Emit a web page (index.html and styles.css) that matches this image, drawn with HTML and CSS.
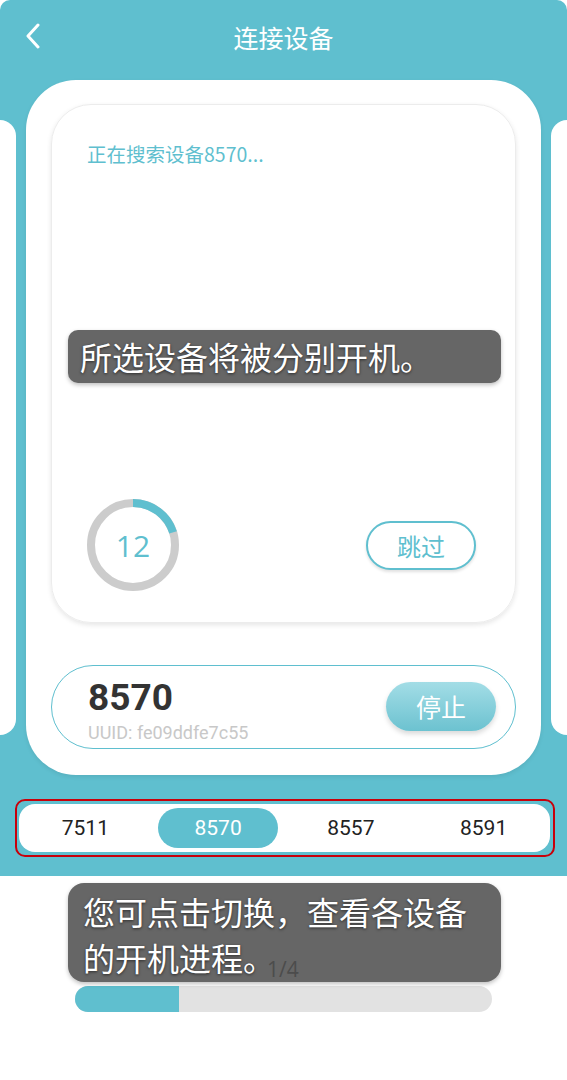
FILE: index.html
```html
<!DOCTYPE html>
<html lang="zh">
<head>
<meta charset="utf-8">
<title>连接设备</title>
<link rel="stylesheet" href="styles.css">
</head>
<body>
<div class="screen">
  <section class="top">
    <header class="header">
      <svg class="back" width="16" height="26" viewBox="0 0 16 26"><path d="M13 2 L3 13 L13 24" fill="none" stroke="#fff" stroke-width="3" stroke-linecap="round" stroke-linejoin="round"/></svg>
      <h1 class="title">连接设备</h1>
    </header>
    <div class="carousel">
      <div class="side side-left"></div>
      <div class="main-card">
        <div class="inner-card">
          <p class="status">正在搜索设备8570...</p>
          <div class="inner-bottom">
            <div class="ring">
              <svg width="94" height="94" viewBox="0 0 94 94">
                <circle cx="47" cy="47" r="42" fill="none" stroke="#cccccc" stroke-width="8"/>
                <circle cx="47" cy="47" r="42" fill="none" stroke="#5fbfcf" stroke-width="8" stroke-dasharray="53 300" transform="rotate(-90 47 47)"/>
              </svg>
              <span class="ring-num">12</span>
            </div>
            <button class="skip">跳过</button>
          </div>
        </div>
        <div class="device">
          <div class="device-info">
            <div class="device-id">8570</div>
            <div class="device-uuid">UUID: fe09ddfe7c55</div>
          </div>
          <button class="stop">停止</button>
        </div>
      </div>
      <div class="side side-right"></div>
    </div>
    <div class="tabs-frame">
      <div class="tabs">
        <span class="tab">7511</span>
        <span class="tab active">8570</span>
        <span class="tab">8557</span>
        <span class="tab">8591</span>
      </div>
    </div>
  </section>
  <section class="bottom">
    <div class="progress"><div class="progress-fill"></div></div>
  </section>

  <div class="tip tip1">所选设备将被分别开机。</div>
  <div class="tip tip2">您可点击切换，查看各设备<br>的开机进程。</div>
  <span class="step">1/4</span>
</div>
</body>
</html>
```

FILE: styles.css
```css
* { box-sizing: border-box; }
html, body { margin: 0; padding: 0; background: #fff; }
body { font-family: "Noto Sans CJK SC", "Noto Sans", Roboto, sans-serif; }

.screen {
  position: relative;
  width: 567px;
  height: 1080px;
  overflow: hidden;
  background: #fff;
}

.top {
  background: #5fbfcf;
  height: 876px;
  border-radius: 10px 10px 0 0;
  display: flex;
  flex-direction: column;
}

.header {
  height: 80px;
  display: flex;
  align-items: flex-start;
  justify-content: center;
  position: relative;
}
.back {
  position: absolute;
  left: 25px;
  top: 23px;
}
.title {
  margin: 18px 0 0;
  font-size: 25px;
  font-weight: 400;
  color: #fff;
  line-height: 38px;
}

.carousel {
  display: flex;
  gap: 10px;
  height: 695px;
}
.side {
  width: 16px;
  background: #fff;
  margin: 40px 0;
}
.side-left { border-radius: 0 30px 30px 0; }
.side-right { border-radius: 30px 0 0 30px; }

.main-card {
  width: 515px;
  background: #fff;
  border-radius: 50px;
  padding: 24px 25px 26px;
  display: flex;
  flex-direction: column;
  gap: 42px;
  box-shadow: 0 2px 4px rgba(0,0,0,0.08);
}

.inner-card {
  height: 519px;
  border-radius: 40px;
  border: 1px solid #ececec;
  box-shadow: 0 2px 5px rgba(0,0,0,0.10);
  display: flex;
  flex-direction: column;
  justify-content: space-between;
  padding: 36px 39px 30px 35px;
}
.status {
  margin: 0;
  color: #5fbfcf;
  font-size: 19.5px;
  line-height: 26px;
}
.inner-bottom {
  display: flex;
  align-items: center;
  justify-content: space-between;
}
.ring {
  position: relative;
  width: 94px;
  height: 94px;
  margin-left: -1px;
}
.ring svg { display: block; }
.ring-num {
  position: absolute;
  inset: 0;
  display: flex;
  align-items: center;
  justify-content: center;
  font-family: "Open Sans", "Noto Sans", sans-serif;
  font-size: 30px;
  color: #5fbfcf;
}
.skip {
  width: 110px;
  height: 49px;
  border: 2px solid #5fbfcf;
  border-radius: 25px;
  background: #fff;
  color: #5fbfcf;
  font-family: "Noto Sans CJK SC", sans-serif;
  font-size: 24px;
  padding: 0;
  box-shadow: 0 2px 3px rgba(0,0,0,0.12);
}

.device {
  height: 84px;
  border: 1.5px solid #5fbfcf;
  border-radius: 42px;
  display: flex;
  align-items: center;
  justify-content: space-between;
  padding: 0 19px 0 36px;
}
.device-info { padding-top: 8px; }
.device-id {
  font-family: Roboto, "Liberation Sans", sans-serif;
  font-weight: 700;
  font-size: 37px;
  color: #333;
  line-height: 40px;
}
.device-uuid {
  font-family: Roboto, "Liberation Sans", sans-serif;
  font-size: 18px;
  color: #c8c8c8;
  line-height: 22px;
  margin-top: 4px;
}
.stop {
  width: 110px;
  height: 49px;
  border: none;
  border-radius: 25px;
  background: linear-gradient(180deg, #a3dde6 0%, #6cc2d0 100%);
  color: #fff;
  font-family: "Noto Sans CJK SC", sans-serif;
  font-size: 25px;
  padding: 0;
  box-shadow: 0 3px 5px rgba(0,0,0,0.15);
  margin-top: -2px;
}

.tabs-frame {
  margin: 24px 12px 0 15px;
  height: 58px;
  border: 2px solid #c8000a;
  border-radius: 10px;
  padding: 3px 3px 3px 2px;
}
.tabs {
  height: 100%;
  background: #fff;
  border-radius: 16px;
  display: grid;
  grid-template-columns: repeat(4, 1fr);
  align-items: center;
  justify-items: center;
}
.tab {
  font-family: Roboto, "Liberation Sans", sans-serif;
  font-size: 21px;
  color: #222;
  line-height: 40px;
}
.tab.active {
  width: 120px;
  height: 40px;
  border-radius: 20px;
  background: #5fbfcf;
  color: #fff;
  text-align: center;
}

.bottom {
  height: 204px;
  padding: 110px 75px 0 75px;
}
.progress {
  height: 26px;
  background: #e2e2e2;
  border-radius: 13px;
  overflow: hidden;
}
.progress-fill {
  width: 25%;
  height: 100%;
  background: #5fbfcf;
}

.tip {
  position: absolute;
  left: 68px;
  width: 433px;
  background: #666;
  color: #fff;
  box-shadow: 0 2px 4px rgba(0,0,0,0.25);
  text-shadow: 0 1px 3px rgba(0,0,0,0.6);
  font-family: "Noto Sans CJK SC", sans-serif;
  font-size: 32px;
}
.tip1 {
  top: 330px;
  height: 53px;
  border-radius: 10px;
  line-height: 53px;
  padding-left: 12px;
}
.tip2 {
  top: 883px;
  height: 99px;
  border-radius: 16px;
  line-height: 46px;
  padding: 5px 0 0 15px;
}
.step {
  position: absolute;
  left: 267px;
  top: 955px;
  font-family: "Open Sans", "Noto Sans", sans-serif;
  font-size: 21px;
  line-height: 28px;
  color: #4c4c4c;
}
```
